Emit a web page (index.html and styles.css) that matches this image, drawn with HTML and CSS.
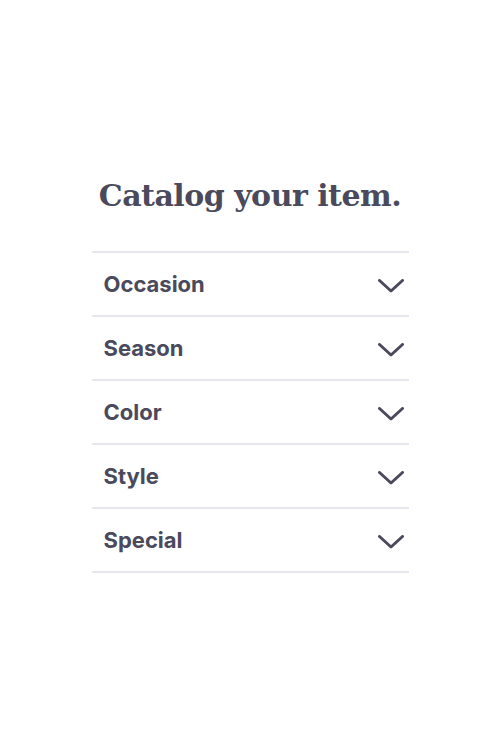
FILE: index.html
```html
<!DOCTYPE html>
<html>
<head>
<meta charset="utf-8">
<link rel="stylesheet" href="styles.css">
</head>
<body>
<main class="page">
  <h1 class="title">Catalog your item.</h1>
  <ul class="list">
    <li class="row"><span class="label">Occasion</span><svg class="chev" viewBox="0 0 26 14"><path d="M1.5 1.5 L13 12 L24.5 1.5"/></svg></li>
    <li class="row"><span class="label">Season</span><svg class="chev" viewBox="0 0 26 14"><path d="M1.5 1.5 L13 12 L24.5 1.5"/></svg></li>
    <li class="row"><span class="label">Color</span><svg class="chev" viewBox="0 0 26 14"><path d="M1.5 1.5 L13 12 L24.5 1.5"/></svg></li>
    <li class="row"><span class="label">Style</span><svg class="chev" viewBox="0 0 26 14"><path d="M1.5 1.5 L13 12 L24.5 1.5"/></svg></li>
    <li class="row"><span class="label">Special</span><svg class="chev" viewBox="0 0 26 14"><path d="M1.5 1.5 L13 12 L24.5 1.5"/></svg></li>
  </ul>
</main>
</body>
</html>
```
FILE: styles.css
```css
html, body {
  margin: 0;
  padding: 0;
  background: #ffffff;
}
.page {
  width: 317px;
  margin: 0 auto;
  padding-top: 173px;
  color: #4a4a5c;
}
.title {
  margin: 0 0 32px 0;
  text-align: center;
  font-family: "DejaVu Serif", serif;
  font-weight: 700;
  font-size: 30px;
  line-height: 46px;
  letter-spacing: -0.5px;
}
.list {
  list-style: none;
  margin: 0;
  padding: 0;
  border-bottom: 2px solid #e6e6ec;
}
.row {
  display: flex;
  align-items: center;
  justify-content: space-between;
  height: 62px;
  border-top: 2px solid #e6e6ec;
  padding: 0 5px 0 12px;
}
.label {
  font-family: "Inter", "Noto Sans", sans-serif;
  font-weight: 700;
  font-size: 22px;
  margin-top: 0;
}
.chev {
  width: 26px;
  height: 14px;
  margin-top: 4px;
  fill: none;
  stroke: #4a4a5c;
  stroke-width: 3;
  stroke-linecap: round;
  stroke-linejoin: round;
}
```
